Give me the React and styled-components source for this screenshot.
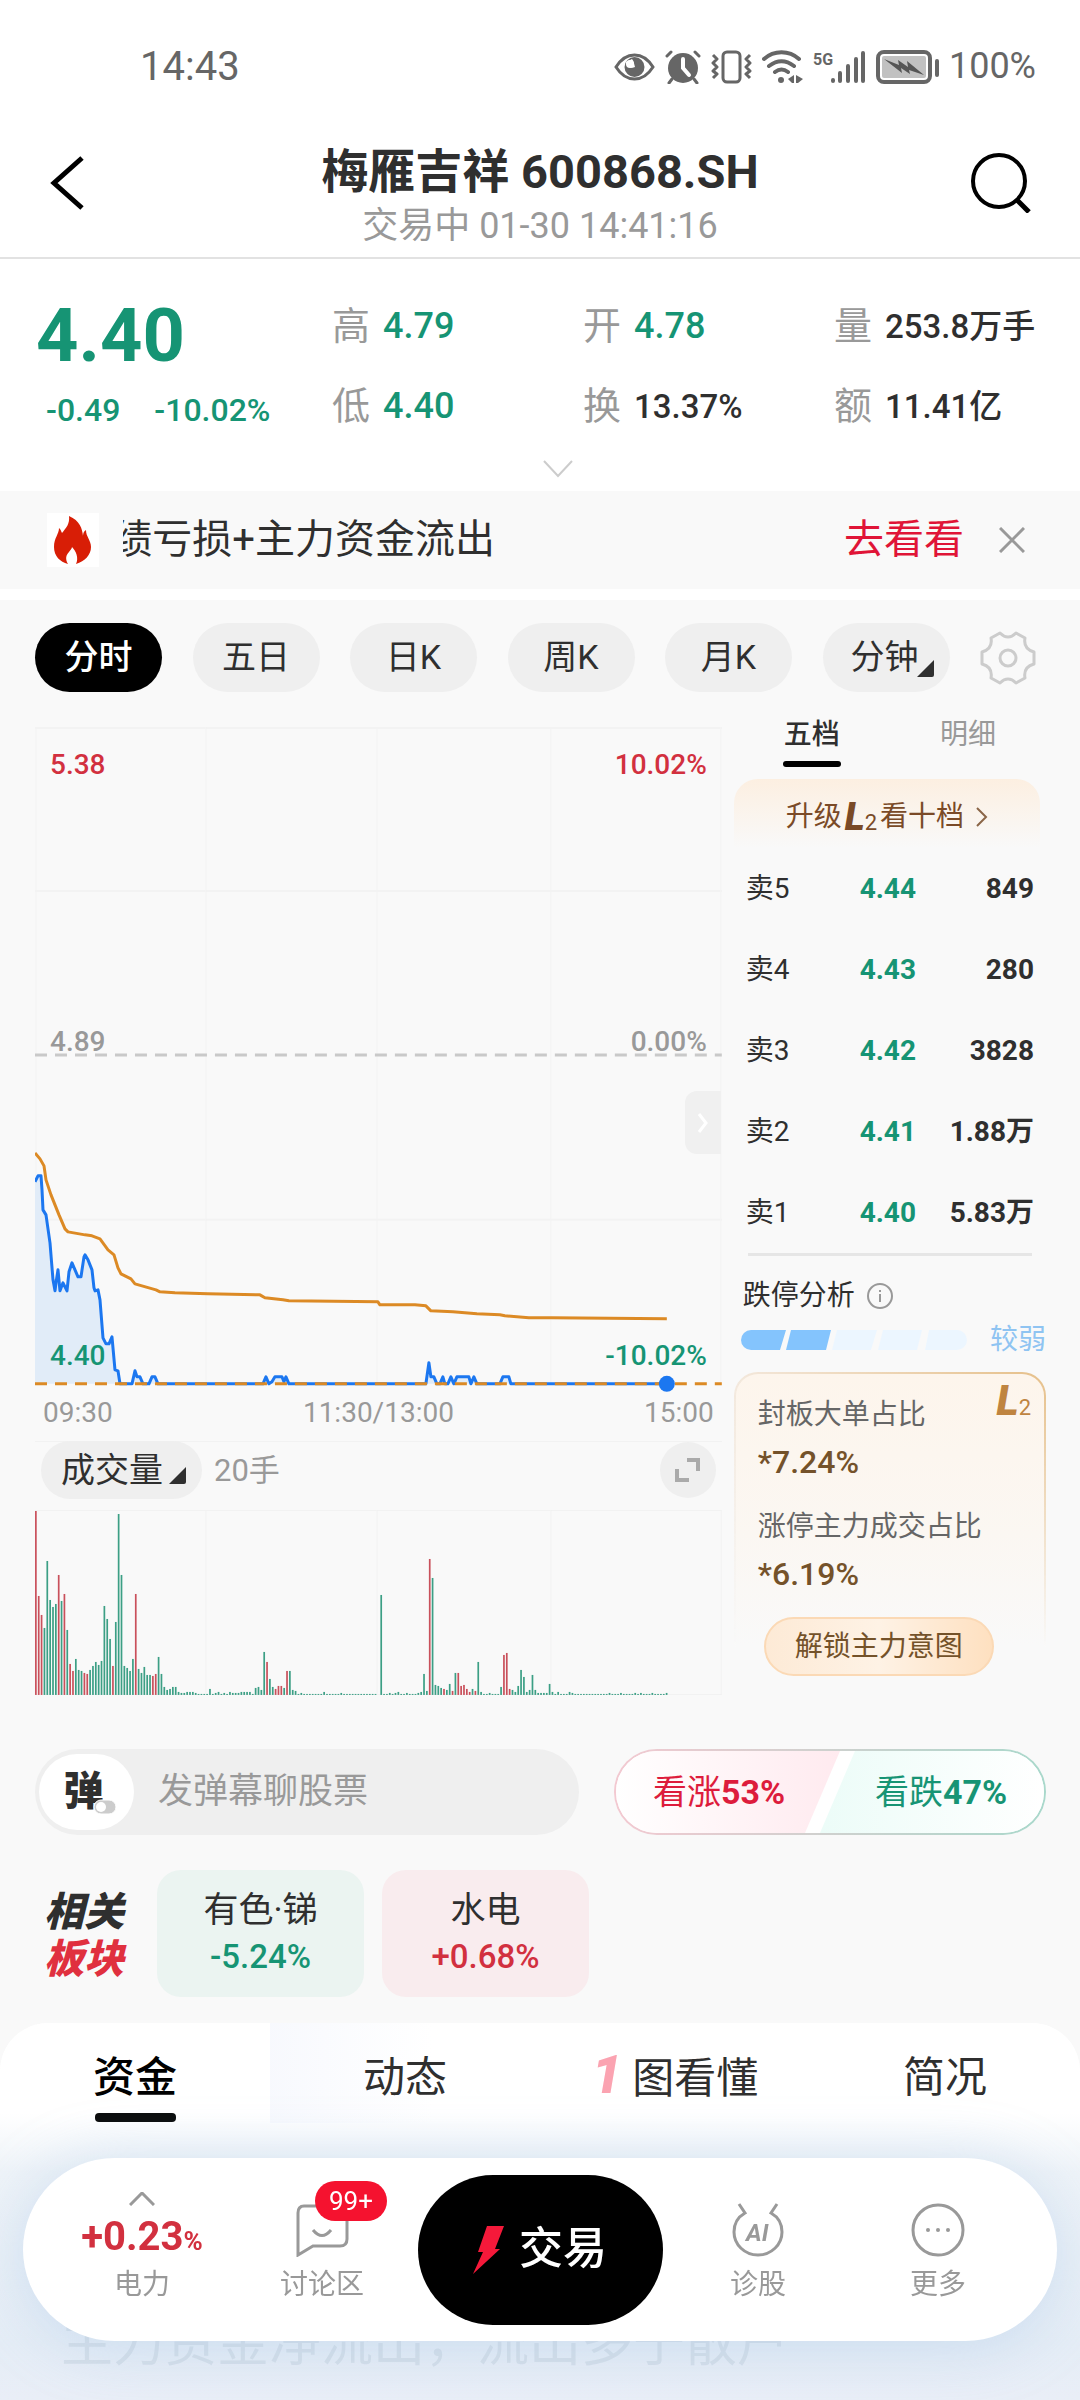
import { useState } from "react"
import styled, { createGlobalStyle } from "styled-components"

const GREEN = "#169474"
const RED = "#d2303f"

const periods = ["分时", "五日", "日K", "周K", "月K"]

const stats = [
    { name: "高", value: "4.79", tone: "green" },
    { name: "开", value: "4.78", tone: "green" },
    { name: "量", value: "253.8万手" },
    { name: "低", value: "4.40", tone: "green" },
    { name: "换", value: "13.37%" },
    { name: "额", value: "11.41亿" },
]

const asks = [
    ["卖5", "4.44", "849"],
    ["卖4", "4.43", "280"],
    ["卖3", "4.42", "3828"],
    ["卖2", "4.41", "1.88万"],
    ["卖1", "4.40", "5.83万"],
]

const sectors = [
    { name: "有色·锑", change: "-5.24%", up: false },
    { name: "水电", change: "+0.68%", up: true },
]

const avgLine = "0,426 5,432 9,439 11,453 16,468 24,488 30,502 33,505 50,508 57,509 65,512 73,523 79,528 83,541 86,547 96,552 100,557 114,561 121,563 125,565 140,566 173,567 225,568 230,571 248,573 254,574 343,575 345,578 380,578 391,579 396,584 418,585 442,587 465,588 470,589 494,591 517,591 632,592"

const priceLine = "0,455 3,449 6,449 7,463 8,483 11,488 15,516 18,553 20,564 21,556 23,543 25,564 28,556 32,564 34,545 37,536 40,543 43,550 46,550 49,530 50,528 53,533 57,543 59,561 60,564 63,563 65,573 68,611 71,617 74,617 77,610 80,643 83,644 85,657 97,657 100,644 102,650 105,650 108,657 114,657 117,650 120,650 123,657 228,657 231,650 234,657 237,655 240,650 247,650 249,655 251,650 254,657 391,657 394,636 396,650 399,650 402,657 405,657 408,650 410,657 413,657 416,650 419,657 422,650 434,650 436,657 439,650 442,657 465,657 468,650 474,650 476,657 632,657"

// one bar per minute, negative means the price went up in that minute
const volumes = [
    -184, -99, -80, 67, 134, 95, 88, 91, -120, 94, -101, 65, -31, -24, 36, 25, 24, -22, -21, 25,
    29, 33, 30, 34, 89, 76, 56, -29, 73, 181, 120, 29, 27, 24, 36, -101, 26, 22, 28, 20,
    20, -19, -21, 38, 21, 8, 5, 6, 8, 8, 3, 2, 2, 3, 3, 3, 2, 1, 1, 1,
    1, 6, 1, 2, 3, 1, 2, 1, 3, 2, 2, 2, 3, 3, 3, 3, 1, 7, 8, 5,
    43, -33, 16, 8, -6, -9, -9, 7, -24, 24, 5, 4, 1, 2, 1, 1, 1, 1, 1, 1,
    1, 3, 1, 1, 1, 1, 1, 2, 1, 1, 1, 1, 1, 1, 1, 1, 1, 1, 1, 1,
    0, 100, 1, 1, 2, 1, 2, 3, 1, 1, 2, 1, 1, 1, 2, 3, 21, 4, -136, 117,
    10, 9, 7, -6, 5, 11, -4, 22, -22, -9, -10, -6, -3, 6, -4, 33, 3, 1, 1, 2,
    1, 1, 1, 8, -40, -42, -6, 5, 3, 9, 25, 18, 3, 5, 20, 5, 2, 2, 2, 2,
    11, 3, 1, 3, 1, 1, 1, 3, 2, 1, 1, 1, 1, 1, 1, 1, 1, 1, 1, 1,
    1, 2, 1, 1, 1, 2, 1, 1, 1, 1, 2, 1, 2, 1, 1, 1, 2, 1, 1, 1,
    1, 2,
]

const StatusIcons = () => (
    <>
        <svg width="41" height="34" viewBox="0 0 41 34" fill="none">
            <path d="M2 17C7 9 13 5 20.500 5S34 9 39 17C34 25 28 29 20.500 29S7 25 2 17Z" stroke="#666" strokeWidth="3" />
            <circle cx="20.500" cy="17" r="10" fill="#666" />
            <path d="M12 12a6 6 0 0 0 9 5c-1-3-1-6-3-8Z" fill="#fff" />
            <circle cx="16" cy="14" r="4" fill="#fff" />
        </svg>
        <svg width="36" height="34" viewBox="0 0 36 34" fill="none" stroke="#666" strokeWidth="4" strokeLinecap="round">
            <circle cx="18" cy="18" r="15" fill="#666" stroke="none" />
            <path d="M2 6l4-4M34 6l-4-4M7 29l-3 4M29 29l3 4" strokeWidth="3" />
            <path d="M18 9v9l6 7" stroke="#fff" />
        </svg>
        <svg width="41" height="34" viewBox="0 0 41 34" fill="none" stroke="#666" strokeWidth="3" strokeLinejoin="round">
            <rect x="12" y="2" width="17" height="30" rx="4" />
            <path d="M2 5l4 4-4 4 4 4-4 4 4 3-4 4M39 5l-4 4 4 4-4 4 4 4-4 3 4 4" />
        </svg>
        <svg width="41" height="34" viewBox="0 0 41 34" fill="none" stroke="#666" strokeWidth="4" strokeLinecap="round">
            <path d="M2 9c10-9 25-9 35 0M7 16c8-6 17-6 25 0M13 22c4-3 9-3 13 0" />
            <circle cx="19" cy="30" r="3" fill="#666" stroke="none" />
            <path d="M32 25v8h-2l-4-4zM34 25l7 4-5 4h-2z" fill="#666" stroke="none" />
        </svg>
        <svg width="53" height="34" viewBox="0 0 53 34" stroke="#666" strokeWidth="4" strokeLinecap="round">
            <text x="0" y="15" fontSize="16" fontWeight="700" fill="#666" stroke="none">5G</text>
            <path d="M20 30v1M27 23v8M35 16v15M43 9v22M50 3v28" />
        </svg>
        <svg width="63" height="34" viewBox="0 0 63 34" fill="none">
            <rect x="2" y="2" width="52" height="30" rx="6" stroke="#666" strokeWidth="4" />
            <rect x="6" y="6" width="44" height="22" rx="2" fill="#c1c1c1" />
            <path d="M8 9l15 6-1-5 10 7-1-6 17 14-15-5 1 4-9-6 1 5z" fill="#555" />
            <rect x="59" y="9" width="4" height="18" rx="2" fill="#666" />
        </svg>
    </>
)

const Triangle = () => (
    <Corner width="17" height="17" viewBox="0 0 17 17" aria-hidden="true">
        <path d="M17 0v15q0 2-2 2H0z" fill="#2f2f2f" />
    </Corner>
)

const Level2 = ({ size }) => (
    <LevelMark $size={size}><b>L</b><small>2</small></LevelMark>
)

const PriceChart = () => (
    <Chart viewBox="0 0 687 665" role="img" aria-label="分时走势">
        <g stroke="#f3f3f3" strokeWidth="2">
            <path d="M0 1H687M0 164H687M0 493H687" />
            <path d="M1 0V657M171 0V657M342 0V657M516 0V657M686 0V657" strokeWidth="1" />
        </g>
        <path d="M0 328H687" stroke="#c9c9c9" strokeWidth="3" strokeDasharray="12 8" />
        <polygon points={`0,657 ${priceLine}`} fill="#e1ecf8" />
        <polyline points={priceLine} fill="none" stroke="#1c77f0" strokeWidth="3" strokeLinejoin="round" />
        <path d="M0 657H687" stroke="#dc8a25" strokeWidth="3" strokeDasharray="12 8" />
        <polyline points={avgLine} fill="none" stroke="#dc8a25" strokeWidth="3" strokeLinejoin="round" />
        <circle cx="632" cy="657" r="8" fill="#1c77f0" />
        <g fontSize="28" fontWeight="500">
            <text x="15" y="47" fill={RED}>5.38</text>
            <text x="672" y="47" fill={RED} textAnchor="end">10.02%</text>
            <text x="15" y="324" fill="#999">4.89</text>
            <text x="672" y="324" fill="#999" textAnchor="end">0.00%</text>
            <text x="15" y="638" fill={GREEN}>4.40</text>
            <text x="672" y="638" fill={GREEN} textAnchor="end">-10.02%</text>
        </g>
    </Chart>
)

const VolumeChart = () => (
    <Chart viewBox="0 0 687 185" role="img" aria-label="成交量">
        <path d="M0 .5H687M0 184.500H687M.5 0V185M171 0V185M342 0V185M516 0V185M686.500 0V185" stroke="#f2f2f2" />
        {volumes.map((v, i) => (
            <rect
                key={i}
                x={i * 2.855}
                y={185 - Math.abs(v)}
                width="1.700"
                height={Math.abs(v)}
                fill={v < 0 ? "#c9505b" : "#3c9f85"}
            />
        ))}
    </Chart>
)

const OrderBook = () => {
    const [tab, setTab] = useState("五档")

    return (
        <Side>
            <SideTabs>
                {["五档", "明细"].map((name) => (
                    <SideTab key={name} $active={tab === name} onClick={() => setTab(name)}>{name}</SideTab>
                ))}
            </SideTabs>
            <Upgrade href="#level2">
                升级<Level2 size={38} />看十档
                <svg width="12" height="20" viewBox="0 0 12 20" fill="none" stroke="#8a6547" strokeWidth="2">
                    <path d="M1 1l9 9-9 9" />
                </svg>
            </Upgrade>
            <Book>
                <tbody>
                    {asks.map(([name, price, qty]) => (
                        <tr key={name}>
                            <th scope="row">{name}</th>
                            <td>{price}</td>
                            <td>{qty}</td>
                        </tr>
                    ))}
                </tbody>
            </Book>
            <Rule />
            <Analysis>
                跌停分析
                <svg width="26" height="26" viewBox="0 0 26 26" fill="none" stroke="#999" strokeWidth="2">
                    <circle cx="13" cy="13" r="12" />
                    <path d="M13 11v8M13 7v2" />
                </svg>
            </Analysis>
            <Strength>
                <Meter viewBox="0 0 226 20" width="226" height="20">
                    <path d="M0 0H45L39 20H0zM50 0H90L85 20H45z" fill="#84c4fd" />
                    <path d="M96 0H136L130 20H91zM142 0H181L176 20H137zM188 0H226V20H184z" fill="#ecf6ff" />
                </Meter>
                较弱
            </Strength>
            <Vip>
                <VipBadge><Level2 size={42} /></VipBadge>
                <dl>
                    <dt>封板大单占比</dt>
                    <dd>*7.24%</dd>
                    <dt>涨停主力成交占比</dt>
                    <dd>*6.19%</dd>
                </dl>
                <Unlock>解锁主力意图</Unlock>
            </Vip>
        </Side>
    )
}

const BottomNav = () => (
    <Nav>
        <NavItem href="#sector">
            <Icon width="26" height="14" viewBox="0 0 26 14"><path d="M1 13L13 1l12 12" /></Icon>
            <Change>+0.23<small>%</small></Change>
            <span>电力</span>
        </NavItem>
        <NavItem href="#talk">
            <IconWrap>
                <Icon width="54" height="54" viewBox="0 0 54 54">
                    <path d="M9 3h36q7 0 7 7v26q0 7-7 7H18L3 52V10q0-7 6-7zM18 27q9 11 18 0" />
                </Icon>
                <Count>99+</Count>
            </IconWrap>
            <span>讨论区</span>
        </NavItem>
        <Trade>
            <svg width="32" height="48" viewBox="0 0 32 48"><path d="M14 0H31L22 23H27L0 48L10 26H5z" fill="#f5193a" /></svg>
            交易
        </Trade>
        <NavItem href="#ai">
            <Icon width="54" height="54" viewBox="0 0 54 54">
                <path d="M8 1l6 9c-7 4-11 11-11 19a24 23 0 0 0 48 0c0-8-4-15-11-19l6-9" />
                <text x="15" y="38" fontSize="24" fontWeight="700" fontStyle="italic" fill="#999" stroke="none">AI</text>
            </Icon>
            <span>诊股</span>
        </NavItem>
        <NavItem href="#more">
            <Icon width="54" height="54" viewBox="0 0 54 54">
                <circle cx="27" cy="27" r="25" />
                <g fill="#999" stroke="none">
                    <circle cx="17" cy="27" r="2" />
                    <circle cx="27" cy="27" r="2" />
                    <circle cx="37" cy="27" r="2" />
                </g>
            </Icon>
            <span>更多</span>
        </NavItem>
    </Nav>
)

const App = () => {
    const [period, setPeriod] = useState("分时")
    const [tab, setTab] = useState("资金")

    return (
        <Page>
            <Global />
            <StatusBar>
                <time>14:43</time>
                <StatusRight>
                    <StatusIcons />
                    <span>100%</span>
                </StatusRight>
            </StatusBar>

            <Header>
                <IconButton aria-label="返回">
                    <svg width="36" height="54" viewBox="0 0 36 54" fill="none" stroke="#000" strokeWidth="5">
                        <path d="M33 2L5 27l28 25" />
                    </svg>
                </IconButton>
                <Title>
                    <h1>梅雁吉祥 600868.SH</h1>
                    <p>交易中 01-30 14:41:16</p>
                </Title>
                <IconButton $right aria-label="搜索">
                    <svg width="60" height="60" viewBox="0 0 60 60" fill="none" stroke="#000" strokeWidth="4">
                        <circle cx="28" cy="28" r="26" />
                        <path d="M46 47l12 12" strokeWidth="5" />
                    </svg>
                </IconButton>
            </Header>

            <Quote>
                <Last>
                    <strong>4.40</strong>
                    <span>-0.49</span>
                    <span>-10.02%</span>
                </Last>
                <Stats>
                    {stats.map((s) => (
                        <Stat key={s.name} $tone={s.tone}>
                            <dt>{s.name}</dt>
                            <dd>{s.value}</dd>
                        </Stat>
                    ))}
                </Stats>
            </Quote>
            <Expand aria-label="展开">
                <svg width="30" height="18" viewBox="0 0 30 18" fill="none" stroke="#ccc" strokeWidth="2">
                    <path d="M1 1l14 15L29 1" />
                </svg>
            </Expand>

            <Notice>
                <Flame>
                    <svg width="40" height="48" viewBox="0 0 40 48">
                        <path d="M16 0c1 8-3 12-7 17-1-2-1-3-3-5 0 6-5 10-5 19 0 9 6 15 14 17-3-5-2-9 1-12 1-2 3-3 3-5 4 4 7 11 4 17 9-3 15-9 15-17 0-7-5-10-5-17-2 1-3 3-3 6C29 12 27 5 16 0z" fill="#d81e06" />
                    </svg>
                </Flame>
                <Marquee><span>绩亏损+主力资金流出</span></Marquee>
                <a href="#news">去看看</a>
                <Close aria-label="关闭">
                    <svg width="26" height="26" viewBox="0 0 26 26" stroke="#999" strokeWidth="3">
                        <path d="M1 1l24 24M25 1L1 25" />
                    </svg>
                </Close>
            </Notice>

            <Board>
                <Periods>
                    {periods.map((p) => (
                        <Pill key={p} $active={period === p} onClick={() => setPeriod(p)}>{p}</Pill>
                    ))}
                    <PickerBox>
                        <Picker aria-label="分钟周期"><option>分钟</option></Picker>
                        <Triangle />
                    </PickerBox>
                    <Gear aria-label="设置">
                        <svg width="56" height="54" viewBox="0 0 56 54" fill="none" stroke="#ccc" strokeWidth="3" strokeLinejoin="round">
                            <path d="M20 2q8 8 16 0l9 5q-2 11 9 14v12q-11 3-9 14l-9 5q-8-8-16 0l-9-5q2-11-9-14V21q11-3 9-14z" />
                            <circle cx="28" cy="27" r="8" />
                        </svg>
                    </Gear>
                </Periods>

                <Columns>
                    <Charts>
                        <PriceChart />
                        <Handle aria-label="收起">
                            <svg width="12" height="20" viewBox="0 0 12 20" fill="none" stroke="#fff" strokeWidth="3">
                                <path d="M2 1l7 9-7 9" />
                            </svg>
                        </Handle>
                        <Axis><span>09:30</span><span>11:30/13:00</span><span>15:00</span></Axis>
                        <VolumeHead>
                            <PickerBox $wide>
                                <Picker $wide aria-label="指标"><option>成交量</option></Picker>
                                <Triangle />
                            </PickerBox>
                            <span>20手</span>
                            <Round aria-label="放大">
                                <svg width="26" height="26" viewBox="0 0 26 26" fill="none" stroke="#aaa" strokeWidth="4">
                                    <path d="M12 3h11v11M2 12v11h12" />
                                </svg>
                            </Round>
                        </VolumeHead>
                        <VolumeChart />
                    </Charts>
                    <OrderBook />
                </Columns>

                <Talk>
                    <Danmu>
                        <DanmuToggle aria-label="弹幕开关">
                            弹
                            <svg width="24" height="16" viewBox="0 0 24 16">
                                <rect x="1" y="1" width="22" height="14" rx="7" fill="#ccc" stroke="#fff" />
                                <circle cx="8" cy="8" r="5" fill="#fff" />
                            </svg>
                        </DanmuToggle>
                        <input aria-label="弹幕" placeholder="发弹幕聊股票" />
                    </Danmu>
                    <Vote>
                        <VoteSide $up>看涨<b>53%</b></VoteSide>
                        <VoteSide>看跌<b>47%</b></VoteSide>
                    </Vote>
                </Talk>

                <Sectors>
                    <SectorTitle>相关<em>板块</em></SectorTitle>
                    {sectors.map((s) => (
                        <Sector key={s.name} href="#sector" $up={s.up}>
                            {s.name}
                            <b>{s.change}</b>
                        </Sector>
                    ))}
                </Sectors>
            </Board>

            <Panel>
                <Tabs>
                    {["资金", "动态", "图看懂", "简况"].map((name) => (
                        <Tab key={name} $active={tab === name} onClick={() => setTab(name)}>
                            <span>{name === "图看懂" && <i>1</i>}{name}</span>
                        </Tab>
                    ))}
                </Tabs>
                <Summary>主力资金净流出，流出多于散户</Summary>
            </Panel>
            <BottomNav />
        </Page>
    )
}

export default App

const Global = createGlobalStyle`
    * {
        box-sizing: border-box;
    }
    body {
        margin: 0;
        background: #fff;
    }
    body, button, input, select {
        font-family: Roboto, "Noto Sans CJK SC", sans-serif;
        line-height: 1.2;
    }
    h1, h2, p, dl, dd {
        margin: 0;
    }
    button {
        border: 0;
        padding: 0;
        background: none;
        color: inherit;
        cursor: pointer;
    }
    a {
        color: inherit;
        text-decoration: none;
    }
    svg {
        flex: none;
    }
`
const Page = styled.div`
    min-height: 100vh;
    display: flex;
    flex-direction: column;
    color: #2f2f2f;
`
const StatusBar = styled.div`
    display: flex;
    justify-content: space-between;
    align-items: center;
    height: 96px;
    padding: 38px 44px 0 140px;
    font-size: 40px;
    color: #666;
`
const StatusRight = styled.div`
    display: flex;
    align-items: center;
    gap: 10px;
    font-size: 36px;
`
const Header = styled.header`
    display: grid;
    grid-template-columns: 1fr auto 1fr;
    align-items: start;
    height: 163px;
    padding: 45px 49px 0;
    border-bottom: 2px solid #e2e2e2;
`
const IconButton = styled.button`
    display: flex;
    align-items: center;
    justify-content: ${(p) => (p.$right ? "flex-end" : "flex-start")};
    height: 84px;
`
const Title = styled.div`
    text-align: center;

    h1 {
        font-size: 47px;
        line-height: 61px;
        font-weight: 700;
    }
    p {
        font-size: 36px;
        line-height: 48px;
        color: #999;
    }
`
const Quote = styled.section`
    display: grid;
    grid-template-columns: 296fr 716fr;
    padding: 28px 32px 0 36px;
`
const Last = styled.div`
    display: grid;
    grid-template-columns: auto 1fr;
    align-content: start;
    column-gap: 34px;
    color: ${GREEN};

    strong {
        grid-column: 1 / -1;
        font-size: 74px;
        line-height: 97px;
    }
    span {
        font-size: 32px;
        line-height: 52px;
        font-weight: 500;
    }
    span:first-of-type {
        padding-left: 10px;
    }
`
const Stats = styled.dl`
    display: grid;
    grid-template-columns: 251fr 251fr 214fr;
`
const Stat = styled.div`
    display: flex;
    align-items: center;
    gap: 13px;
    height: 80px;
    white-space: nowrap;

    dt {
        font-size: 38px;
        color: #999;
    }
    dd {
        font-size: ${(p) => (p.$tone ? "36px" : "33px")};
        font-weight: 500;
        color: ${(p) => (p.$tone ? GREEN : "inherit")};
    }
`
const Expand = styled.button`
    display: flex;
    justify-content: center;
    align-items: center;
    height: 44px;
    padding-left: 36px;
`
const Notice = styled.section`
    display: flex;
    align-items: center;
    height: 98px;
    padding: 0 55px 0 47px;
    background: #f9f9f9;
    font-size: 40px;

    a {
        margin-left: auto;
        color: #e01437;
    }
`
const Flame = styled.div`
    display: grid;
    place-items: center;
    width: 52px;
    height: 54px;
    margin-right: 24px;
    background: #fff;
`
const Marquee = styled.div`
    display: flex;
    justify-content: flex-end;
    width: 372px;
    overflow: hidden;
    white-space: nowrap;
`
const Close = styled.button`
    display: flex;
    margin-left: 35px;
`
const Board = styled.main`
    margin-top: 11px;
    padding: 23px 34px 26px 35px;
    background: #f9f9f9;
`
const Periods = styled.div`
    display: flex;
    justify-content: space-between;
    align-items: center;
    padding-right: 10px;
`
const Pill = styled.button`
    width: 127px;
    height: 69px;
    border-radius: 35px;
    background: ${(p) => (p.$active ? "#000" : "#efefef")};
    color: ${(p) => (p.$active ? "#fff" : "#2f2f2f")};
    font-size: 34px;
    font-weight: ${(p) => (p.$active ? 500 : 400)};
`
const PickerBox = styled.div`
    position: relative;
    width: ${(p) => (p.$wide ? "161px" : "127px")};
    height: ${(p) => (p.$wide ? "58px" : "69px")};
    border-radius: 35px;
    background: #efefef;
`
const Picker = styled.select`
    appearance: none;
    width: 100%;
    height: 100%;
    padding: 0 0 0 ${(p) => (p.$wide ? "20px" : "28px")};
    border: 0;
    background: none;
    font-size: 34px;
    color: #2f2f2f;
`
const Corner = styled.svg`
    position: absolute;
    right: 16px;
    bottom: 15px;
    pointer-events: none;
`
const Gear = styled.button`
    display: flex;
`
const Columns = styled.div`
    display: grid;
    grid-template-columns: 11fr 5fr;
    column-gap: 12px;
    margin-top: 14px;
`
const Charts = styled.div`
    position: relative;
    padding-top: 21px;
`
const Chart = styled.svg`
    display: block;
    width: 100%;
    height: auto;
`
const Handle = styled.button`
    position: absolute;
    right: 1px;
    top: 385px;
    display: grid;
    place-items: center;
    width: 36px;
    height: 63px;
    border-radius: 12px 0 0 12px;
    background: #f0f0f0;
`
const Axis = styled.div`
    display: flex;
    justify-content: space-between;
    padding: 4px 8px 11px;
    font-size: 28px;
    line-height: 34px;
    color: #999;
`
const VolumeHead = styled.div`
    display: flex;
    align-items: center;
    gap: 12px;
    height: 69px;
    padding: 0 6px 11px;
    border-top: 1px solid #f2f2f2;

    span {
        font-size: 31px;
        color: #999;
    }
`
const Round = styled.button`
    display: grid;
    place-items: center;
    width: 56px;
    height: 56px;
    margin-left: auto;
    border-radius: 50%;
    background: #efefef;
`
const Side = styled.aside`
    font-size: 28px;
`
const SideTabs = styled.div`
    display: grid;
    grid-template-columns: 1fr 1fr;
`
const SideTab = styled.button`
    display: flex;
    flex-direction: column;
    align-items: center;
    height: 73px;
    padding-top: 9px;
    font-size: 28px;
    line-height: 40px;
    font-weight: ${(p) => (p.$active ? 500 : 400)};
    color: ${(p) => (p.$active ? "#2f2f2f" : "#999")};

    &::after {
        content: "";
        width: 58px;
        height: 6px;
        margin-top: 6px;
        border-radius: 3px;
        background: ${(p) => (p.$active ? "#000" : "transparent")};
    }
`
const Upgrade = styled.a`
    display: flex;
    align-items: center;
    justify-content: center;
    height: 69px;
    margin-right: 6px;
    padding-top: 6px;
    border-radius: 24px 24px 0 0;
    background: linear-gradient(#fcefe1, #f9f9f9);
    color: #7a4a27;

    svg {
        margin-left: 12px;
    }
`
const LevelMark = styled.span`
    display: inline-flex;
    align-items: baseline;
    padding: 0 3px;
    line-height: 1;

    b {
        font-size: ${(p) => p.$size}px;
        font-style: italic;
        font-weight: 900;
    }
    small {
        font-size: 22px;
    }
`
const Book = styled.table`
    width: 100%;
    border-collapse: collapse;

    tr {
        height: 81px;
    }
    th {
        padding: 0 0 0 12px;
        font-weight: 400;
        text-align: left;
    }
    td {
        padding: 0;
        font-weight: 700;
        text-align: right;
        color: ${GREEN};
    }
    td:last-child {
        width: 130px;
        padding-right: 12px;
        color: #2f2f2f;
    }
`
const Rule = styled.div`
    height: 3px;
    margin: 0 14px 20px;
    background: #e6e6e6;
`
const Analysis = styled.div`
    display: flex;
    align-items: center;
    gap: 12px;
    height: 40px;
    padding-left: 9px;
`
const Strength = styled.div`
    display: flex;
    align-items: center;
    justify-content: space-between;
    height: 40px;
    margin-top: 4px;
    padding-left: 7px;
    color: #8fc4f2;
`
const Meter = styled.svg`
    border-radius: 10px;
    overflow: hidden;
`
const Vip = styled.section`
    position: relative;
    margin-top: 12px;
    padding: 22px 22px 18px;
    border: 2px solid transparent;
    border-radius: 24px;
    background:
        linear-gradient(#fdf5ec, #fbf7f2 50%, #f9f9f9 85%) padding-box,
        linear-gradient(to bottom, transparent, #f9f9f9 85%) border-box,
        linear-gradient(to right, #f3e8dc, #e6c08a) border-box;

    dt {
        line-height: 38px;
        color: #666;
    }
    dd {
        margin: 4px 0 22px;
        font-size: 32px;
        line-height: 48px;
        font-weight: 500;
        color: #74522a;
    }
    dd:last-child {
        margin-bottom: 19px;
    }
`
const VipBadge = styled.div`
    position: absolute;
    top: 6px;
    right: 10px;
    color: #bf8440;
`
const Unlock = styled.button`
    display: block;
    width: 230px;
    height: 59px;
    margin: 0 6px;
    border: 2px solid #fbd9b5;
    border-radius: 30px;
    background: linear-gradient(to right, #fdead6, #fef2e5 50%, #fee0c0);
    font-size: 28px;
    color: #74522a;
`
const Talk = styled.div`
    display: flex;
    justify-content: space-between;
    gap: 35px;
    margin-top: 53px;
`
const Danmu = styled.div`
    flex: 1;
    min-width: 0;
    display: flex;
    align-items: center;
    height: 86px;
    padding: 0 4px;
    border-radius: 43px;
    background: #efefef;

    input {
        flex: 1;
        min-width: 0;
        padding: 0 24px;
        border: 0;
        outline: 0;
        background: none;
        font-size: 35px;
    }
    input::placeholder {
        color: #999;
    }
`
const DanmuToggle = styled.button`
    position: relative;
    flex: none;
    width: 95px;
    height: 76px;
    padding-right: 6px;
    border-radius: 38px;
    background: #fff;
    font-size: 40px;
    font-weight: 900;

    svg {
        position: absolute;
        right: 17px;
        bottom: 15px;
    }
`
const Vote = styled.div`
    display: flex;
    flex: none;
    width: 432px;
    height: 86px;
    border: 2px solid transparent;
    border-radius: 43px;
    overflow: hidden;
    background:
        linear-gradient(#fff, #fff) padding-box,
        linear-gradient(to right, #f3c9d1, #a9d8cb) border-box;
`
const VoteSide = styled.button`
    flex: 1;
    font-size: 34px;
    color: ${(p) => (p.$up ? "#dd1c3c" : GREEN)};
    background: ${(p) => (p.$up ? "linear-gradient(to right, #fff, #ffeaef)" : "linear-gradient(to right, #ecfcf8, #fff)")};
    clip-path: ${(p) => (p.$up
        ? "polygon(0 0, 100% 0, calc(100% - 35px) 100%, 0 100%)"
        : "polygon(35px 0, 100% 0, 100% 100%, 0 100%)")};
    margin-left: ${(p) => (p.$up ? "0" : "-20px")};
    padding: ${(p) => (p.$up ? "0 18px 0 0" : "0 0 0 18px")};
`
const Sectors = styled.section`
    display: flex;
    align-items: center;
    gap: 18px;
    margin-top: 35px;
`
const SectorTitle = styled.h2`
    width: 104px;
    padding: 4px 0 0 9px;
    font-size: 40px;
    line-height: 47px;
    font-weight: 900;
    font-style: italic;

    em {
        display: block;
        color: #e0303f;
    }
`
const Sector = styled.a`
    display: flex;
    flex-direction: column;
    align-items: center;
    width: 207px;
    height: 127px;
    padding-top: 17px;
    border-radius: 24px;
    background: ${(p) => (p.$up ? "#f9ecee" : "#ebf4f1")};
    font-size: 35px;
    line-height: 48px;

    b {
        font-size: 33px;
        line-height: 44px;
        font-weight: 500;
        color: ${(p) => (p.$up ? RED : GREEN)};
    }
`
const Panel = styled.section`
    flex: 1;
    border-radius: 48px 48px 0 0;
    overflow: hidden;
    background: linear-gradient(#fff 90px, #eef3f8 150px, #e5edf6 320px, #e9eef7);
    box-shadow: 0 -48px 0 0 #f9f9f9, 0 0 0 48px #f9f9f9;
    clip-path: inset(0);
`
const Tabs = styled.div`
    display: grid;
    grid-template-columns: repeat(4, 1fr);
`
const Tab = styled.button`
    display: flex;
    flex-direction: column;
    align-items: center;
    padding-top: 25px;
    font-size: 42px;
    line-height: 60px;
    font-weight: ${(p) => (p.$active ? 500 : 400)};
    color: ${(p) => (p.$active ? "#000" : "#2f2f2f")};

    &:nth-child(2) {
        background: linear-gradient(to right, rgba(240, 243, 252, 0.5), rgba(255, 255, 255, 0) 60%);
    }
    i {
        margin-right: 10px;
        font-size: 54px;
        font-weight: 900;
        line-height: 1;
        color: #fba3b1;
    }
    &::after {
        content: "";
        width: 81px;
        height: 9px;
        margin-top: 5px;
        border-radius: 4px;
        background: ${(p) => (p.$active ? "#0a0c0c" : "transparent")};
    }
`
const Summary = styled.p`
    padding: 191px 61px 20px;
    font-size: 52px;
    line-height: 60px;
    white-space: nowrap;
    overflow: hidden;
    color: #d5dfe9;
`
const Nav = styled.nav`
    position: fixed;
    left: 23px;
    right: 23px;
    bottom: 59px;
    display: grid;
    grid-template-columns: 180fr 180fr 256fr 180fr 180fr;
    align-items: center;
    height: 183px;
    padding: 0 29px;
    border-radius: 92px;
    background: #fff;
    box-shadow: 0 4px 60px rgba(150, 185, 225, 0.35);
`
const NavItem = styled.a`
    display: flex;
    flex-direction: column;
    align-items: center;
    justify-content: flex-end;
    height: 183px;
    padding-bottom: 36px;
    font-size: 28px;
    line-height: 40px;
    color: #999;

    > span {
        margin-top: 8px;
    }
`
const Icon = styled.svg`
    fill: none;
    stroke: #999;
    stroke-width: 3px;
`
const IconWrap = styled.div`
    position: relative;
    display: flex;
`
const Count = styled.div`
    position: absolute;
    left: 20px;
    top: -22px;
    padding: 0 14px;
    border-radius: 20px;
    background: #f5122f;
    font-size: 26px;
    color: #fff;
`
const Change = styled.strong`
    margin-top: 11px;
    font-size: 40px;
    color: ${RED};

    small {
        font-size: 26px;
        line-height: 1;
    }
`
const Trade = styled.button`
    display: flex;
    justify-content: center;
    align-items: center;
    gap: 14px;
    justify-self: center;
    width: 245px;
    height: 150px;
    border-radius: 75px;
    background: #000;
    color: #fff;
    font-size: 44px;
    font-weight: 500;
`
